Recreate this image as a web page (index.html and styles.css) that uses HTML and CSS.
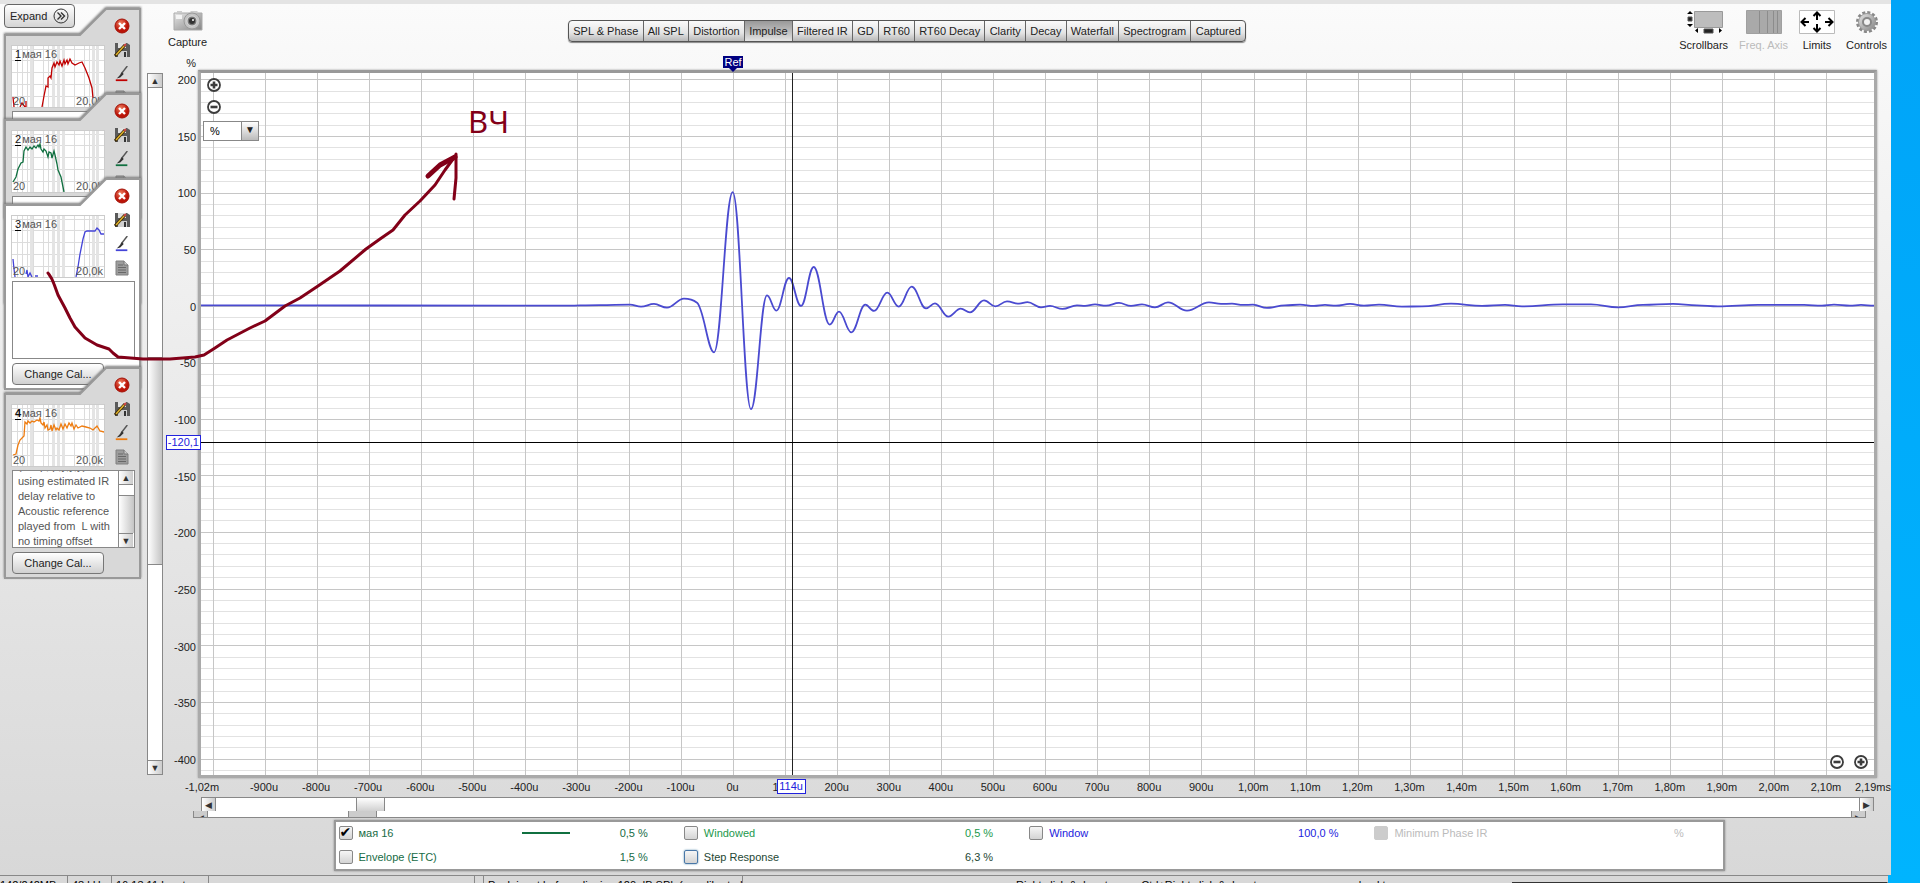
FILE: index.html
```html
<!DOCTYPE html>
<html lang="en">
<head>
    <meta charset="utf-8">
    <title>Impulse</title>
    <link rel="stylesheet" href="styles.css">
</head>
<body>
<svg class="defs" aria-hidden="true">
    <defs>
        <radialGradient id="red" cx="40%" cy="30%"><stop offset="0" stop-color="#f08060"/><stop offset="1" stop-color="#bb1408"/></radialGradient>
        <linearGradient id="steel" x2="1" y2="1"><stop offset="0" stop-color="#e6e6e6"/><stop offset="1" stop-color="#858585"/></linearGradient>
    </defs>
    <symbol id="shape" viewBox="0 0 137 212" preserveAspectRatio="none">
        <path d="M1 27H76L102 1H136V211H1Z"/>
    </symbol>
    <symbol id="delete" viewBox="0 0 16 16">
        <circle cx="8" cy="8" r="7" fill="url(#red)" stroke="#a31208"/>
        <path d="M5 5l6 6M11 5l-6 6" stroke="#fff" stroke-width="2.4"/>
    </symbol>
    <symbol id="save" viewBox="0 0 16 16">
        <path d="M1 1h12l3 2v12H1z" fill="#5a5a5a"/>
        <path d="M4 1h8v5H4z" fill="#e0e0e0"/><path d="M4 9h9v6H4z" fill="#d0d0d0"/><path d="M10 10h2v5h-2z" fill="#333"/>
        <path d="M1 14L11 3" stroke="#3c2a08" stroke-width="3"/><path d="M2 13L10 4" stroke="#e2b52c" stroke-width="1.4"/>
        <path d="M10 4l2-2" stroke="#c44" stroke-width="2"/>
    </symbol>
    <symbol id="pen" viewBox="0 0 16 18">
        <path d="M14 0L7 9" stroke="#555" stroke-width="1.6"/><path d="M8 7l2 2-4 4-4 1 3-3z" fill="#333"/>
        <path d="M1 16h13" stroke="currentColor" stroke-width="2"/>
    </symbol>
    <symbol id="notes" viewBox="0 0 14 16">
        <path d="M1 1h8l4 4v10H1z" fill="#9c9c9c" stroke="#808080"/><path d="M9 1v4h4" fill="#ccc" stroke="#777"/>
        <path d="M3 5h5M3 7.500h8M3 10h8M3 12.500h8" stroke="#686868"/>
    </symbol>
    <symbol id="thumbgrid" viewBox="0 0 92 61">
        <path d="M0 3.500h92M0 14.500h92M0 26.500h92M0 38.500h92M0 50.500h92M5.500 0v61M10.500 0v61M15.500 0v61M21.500 0v61M31.500 0v61M36.500 0v61M62.500 0v61M72.500 0v61M77.500 0v61" stroke="#dcdcdc" fill="none"/>
        <path d="M19.500 0v61M41.500 0v61M46.500 0v61M51.500 0v61M81.500 0v61M85.500 0v61" stroke="#e4e4e4" stroke-width="3"/>
    </symbol>
    <symbol id="plus" viewBox="0 0 14 14">
        <circle cx="7" cy="7" r="6" fill="#fff" stroke="#3c3c3c" stroke-width="1.800"/><path d="M3.500 7h7M7 3.500v7" stroke="#3c3c3c" stroke-width="2.600"/>
    </symbol>
    <symbol id="minus" viewBox="0 0 14 14">
        <circle cx="7" cy="7" r="6" fill="#fff" stroke="#3c3c3c" stroke-width="1.800"/><path d="M3.500 7h7" stroke="#3c3c3c" stroke-width="2.600"/>
    </symbol>
</svg>

<div class="window">
    <aside class="sidebar">
        <button class="expand">Expand
            <svg width="16" height="16" viewBox="0 0 16 16" fill="none" stroke="#333"><circle cx="8" cy="8" r="7"/><path d="M4.500 4.500L8 8l-3.500 3.500M8 4.500L11.500 8 8 11.500" stroke-width="1.400"/></svg>
        </button>

        <section class="card">
            <svg class="shape"><use href="#shape"/></svg>
            <div class="thumb">
                <svg viewBox="0 0 92 61"><use href="#thumbgrid"/><path class="trace red" d="M1 51L2 61M8 61L10 57 13 61M14 55V61M30 61L32 50 34 40 36 41 36 32 38 30 39 32 40 22 42 17 43 21 45 16 47 19 48 15 50 20 52 14 53 18 55 14 56 18 58 13 60 17 63 19 67 17 70 16 73 22 77 32 80 42 81 52"/></svg>
                <span class="name"><b>1</b>мая 16</span><span class="range"><i>20</i><i>20,0k</i></span>
            </div>
            <div class="icons red">
                <button aria-label="Delete"><svg><use href="#delete"/></svg></button>
                <button aria-label="Save"><svg><use href="#save"/></svg></button>
                <button aria-label="Colour"><svg><use href="#pen"/></svg></button>
                <button aria-label="Notes"><svg><use href="#notes"/></svg></button>
            </div>
            <div class="comment"><textarea aria-label="Comment 1"></textarea></div>
            <button class="cal">Change Cal...</button>
        </section>

        <section class="card">
            <svg class="shape"><use href="#shape"/></svg>
            <div class="thumb">
                <svg viewBox="0 0 92 61"><use href="#thumbgrid"/><path class="trace green" d="M1 51L4 46 6 38 9 32 11 31 12 20 14 16 16 19 18 16 20 18 22 15 24 17 26 14 27 16 28 13 29 18 31 21 32 18 34 20 36 26 37 21 39 22 40 27 42 20 43 24 45 33 46 39 49 46 52 61"/></svg>
                <span class="name"><b>2</b>мая 16</span><span class="range"><i>20</i><i>20,0k</i></span>
            </div>
            <div class="icons green">
                <button aria-label="Delete"><svg><use href="#delete"/></svg></button>
                <button aria-label="Save"><svg><use href="#save"/></svg></button>
                <button aria-label="Colour"><svg><use href="#pen"/></svg></button>
                <button aria-label="Notes"><svg><use href="#notes"/></svg></button>
            </div>
            <div class="comment"><textarea aria-label="Comment 2"></textarea></div>
            <button class="cal">Change Cal...</button>
        </section>

        <section class="card selected">
            <svg class="shape"><use href="#shape"/></svg>
            <div class="thumb">
                <svg viewBox="0 0 92 61"><use href="#thumbgrid"/><path class="trace blue" d="M1 43L2 53 3 61M14 58L15 54 16 61 18 57 20 61M23 60H26M64 61L66 51 68 38 71 23 73 16 75 15 81 15 83 15 85 12 87 14 89 18 92 18"/></svg>
                <span class="name"><b>3</b>мая 16</span><span class="range"><i>20</i><i>20,0k</i></span>
            </div>
            <div class="icons blue">
                <button aria-label="Delete"><svg><use href="#delete"/></svg></button>
                <button aria-label="Save"><svg><use href="#save"/></svg></button>
                <button aria-label="Colour"><svg><use href="#pen"/></svg></button>
                <button aria-label="Notes"><svg><use href="#notes"/></svg></button>
            </div>
            <div class="comment"><textarea aria-label="Comment 3"></textarea></div>
            <button class="cal">Change Cal...</button>
        </section>

        <section class="card last">
            <svg class="shape"><use href="#shape"/></svg>
            <div class="thumb">
                <svg viewBox="0 0 92 61"><use href="#thumbgrid"/><path class="trace orange" d="M1 50L4 49 6 40 8 35 11 32 12 31 13 17 15 19 16 16 18 18 20 16 22 17 25 15 27 16 28 13 29 18 31 20 32 17 33 23 35 20 36 25 38 24 39 20 40 26 42 20 44 25 45 23 47 25 49 19 51 24 53 19 55 23 57 18 59 21 60 18 62 24 64 20 66 23 70 21 74 22 78 23 81 25 85 21 88 26 92 27"/></svg>
                <span class="name"><b>4</b>мая 16</span><span class="range"><i>20</i><i>20,0k</i></span>
            </div>
            <div class="icons orange">
                <button aria-label="Delete"><svg><use href="#delete"/></svg></button>
                <button aria-label="Save"><svg><use href="#save"/></svg></button>
                <button aria-label="Colour"><svg><use href="#pen"/></svg></button>
                <button aria-label="Notes"><svg><use href="#notes"/></svg></button>
            </div>
            <div class="comment">
                <textarea id="comment4" aria-label="Comment 4">(temp, p,y,y,y)
using estimated IR
delay relative to
Acoustic reference
played from  L with
no timing offset</textarea>
                <div class="scroll vertical small">
                    <button aria-label="Scroll up">&#9650;</button>
                    <div class="track"><div class="before"></div><div class="handle"></div></div>
                    <button aria-label="Scroll down">&#9660;</button>
                </div>
            </div>
            <button class="cal">Change Cal...</button>
        </section>
    </aside>

    <main class="main">
        <header class="toolbar">
            <button class="tool">
                <svg width="30" height="22" viewBox="0 0 30 22"><path d="M1 3h28v17H1z" fill="url(#steel)" stroke="#aaa"/><path d="M4 1h5v2H4zM16 3l2-2h6l2 2z" fill="#ccc"/><path d="M3 5h6v4H3z" fill="#f4f4f4"/><circle cx="19" cy="11" r="8" fill="#c4c4c4" stroke="#999"/><circle cx="19" cy="11" r="5" fill="#777" stroke="#ddd"/><circle cx="19" cy="11" r="3" fill="#333"/><circle cx="20" cy="10" r="1" fill="#fff"/></svg>
                Capture
            </button>
            <nav class="tabs">
                <button>SPL &amp; Phase</button><button>All SPL</button><button>Distortion</button><button class="active">Impulse</button><button>Filtered IR</button><button>GD</button><button>RT60</button><button>RT60 Decay</button><button>Clarity</button><button>Decay</button><button>Waterfall</button><button>Spectrogram</button><button>Captured</button>
            </nav>
            <div class="tools">
                <button class="tool">
                    <svg width="38" height="24" viewBox="0 0 38 24"><path d="M9.500 1.500h28v16h-28z" fill="#bdbdbd" stroke="#999"/><path d="M3 7h4v4H3zM19 19h9v4h-9z" fill="#222" stroke="#555"/><path d="M2 4l3-3 3 3zM2 14l3 3 3-3zM13 18v5l-3-2.500zM34 18v5l3-2.500z" fill="#000"/></svg>
                    Scrollbars
                </button>
                <button class="tool" disabled>
                    <svg width="36" height="24" viewBox="0 0 36 24"><path d="M.5.500h35v23H.5z" fill="#a9a9a9" stroke="#a0a0a0"/><path d="M13.500 1v22M21.500 1v22M27.500 1v22M31.500 1v22" stroke="#8c8c8c"/></svg>
                    Freq. Axis
                </button>
                <button class="tool">
                    <svg width="36" height="24" viewBox="0 0 36 24"><path d="M.5.500h35v23H.5z" fill="#fff" stroke="#bbb"/><path d="M3 12h7M6.500 8L2.500 12l4 4M33 12h-7M29.500 8l4 4-4 4M18 10V3M14.500 6L18 2.500 21.500 6M18 14v7M14.500 18l3.500 3.500 3.500-3.500" fill="none" stroke="#000" stroke-width="2"/></svg>
                    Limits
                </button>
                <button class="tool">
                    <svg width="24" height="24" viewBox="0 0 24 24"><circle cx="12" cy="12" r="9.500" fill="none" stroke="#888" stroke-width="3" stroke-dasharray="3 1.970"/><circle cx="12" cy="12" r="8.500" fill="url(#steel)" stroke="#999"/><circle cx="12" cy="12" r="4" fill="#f2f2f2" stroke="#888" stroke-width="2"/></svg>
                    Controls
                </button>
            </div>
        </header>

        <div class="chart">
            <div class="scroll vertical levels">
                <button aria-label="Up">&#9650;</button>
                <div class="track"><div class="before"></div><div class="handle"></div></div>
                <button aria-label="Down">&#9660;</button>
            </div>
            <div class="yaxis">
                <span>%</span>
                <div class="yticks">
                    <span>200</span><span>150</span><span>100</span><span>50</span><span>0</span><span>-50</span><span>-100</span><span>-150</span><span>-200</span><span>-250</span><span>-300</span><span>-350</span><span>-400</span>
                </div>
            </div>
            <div class="plot">
                <svg class="graph" viewBox="201 73 1673 703" preserveAspectRatio="none">
                    <path id="minor" class="minor"/>
                    <path id="major" class="major"/>
                    <path id="impulse" class="impulse"/>
                </svg>
                <div class="cursor-x"></div>
                <div class="cursor-y"></div>
                <span class="ref">Ref</span>
                <span class="tag-x">114u</span>
                <span class="tag-y">-120,1</span>
                <div class="zoom-y">
                    <button aria-label="Zoom in level"><svg><use href="#plus"/></svg></button>
                    <button aria-label="Zoom out level"><svg><use href="#minus"/></svg></button>
                    <div class="units"><select aria-label="Units"><option>%</option></select></div>
                </div>
                <div class="zoom-x">
                    <button aria-label="Zoom out time"><svg><use href="#minus"/></svg></button>
                    <button aria-label="Zoom in time"><svg><use href="#plus"/></svg></button>
                </div>
            </div>
        </div>

        <div class="xaxis">
            <span>-1,02m</span><span>-900u</span><span>-800u</span><span>-700u</span><span>-600u</span><span>-500u</span><span>-400u</span><span>-300u</span><span>-200u</span><span>-100u</span><span>0u</span><span>100u</span><span>200u</span><span>300u</span><span>400u</span><span>500u</span><span>600u</span><span>700u</span><span>800u</span><span>900u</span><span>1,00m</span><span>1,10m</span><span>1,20m</span><span>1,30m</span><span>1,40m</span><span>1,50m</span><span>1,60m</span><span>1,70m</span><span>1,80m</span><span>1,90m</span><span>2,00m</span><span>2,10m</span><span>2,19ms</span>
        </div>

        <div class="scroll horizontal">
            <button aria-label="Left">&#9664;</button>
            <div class="track"><div class="before"></div><div class="handle"></div></div>
            <button aria-label="Right">&#9654;</button>
        </div>
        <div class="scroll horizontal lower">
            <button tabindex="-1" aria-label="Left">&#9664;</button>
            <div class="track"><div class="before"></div><div class="handle"></div></div>
            <button tabindex="-1" aria-label="Right">&#9654;</button>
        </div>

        <div class="legend">
            <div class="item dark"><input type="checkbox" id="t1" checked><label for="t1">мая 16</label><span class="line"></span><span class="value">0,5 %</span></div>
            <div class="item light"><input type="checkbox" id="t2"><label for="t2">Windowed</label><span class="value">0,5 %</span></div>
            <div class="item window-trace"><input type="checkbox" id="t3"><label for="t3">Window</label><span class="value">100,0 %</span></div>
            <div class="item off"><input type="checkbox" id="t4" disabled><label for="t4">Minimum Phase IR</label><span class="value">%</span></div>
            <div class="item etc"><input type="checkbox" id="t5"><label for="t5">Envelope (ETC)</label><span class="value">1,5 %</span></div>
            <div class="item step"><input type="checkbox" id="t6" class="focus"><label for="t6">Step Response</label><span class="value">6,3 %</span></div>
        </div>
    </main>

    <svg class="note" width="520" height="380" viewBox="0 0 520 380">
        <path d="M48 273C50 276 52 278 54 284L58 295 65 308 70 318 75 327 85 338 97 345 109 349 113 353 118 357 143 359H170L195 357 204 355 215 348 227 340 250 328 265 321 285 306 300 298 318 286 340 271 366 249 380 239 393 230 405 215 420 201 435 185 445 170 456 155M454 199L456 178 456 154"/>
        <path class="barb" d="M428 176L440 165 455 157"/>
        <text x="468" y="133">ВЧ</text>
    </svg>
</div>

<footer class="status">
    <span class="s1">142/242MB</span><span class="s2">48 kHz</span><span class="s3">16:13:11 Input</span><span class="s4"></span><span class="s5"></span><span class="s6">Peak input before clipping 120 dB SPL (uncalibrated)</span><span class="s7">Right click &amp; drag to pan; Ctrl+Right click &amp; drag to measure; mouse wheel to zoom;</span><span class="meter"></span>
</footer>
<script src="chart.js"></script>
</body>
</html>
```

FILE: styles.css
```css
* { box-sizing: border-box; }
html { height: 100%; background: linear-gradient(#00a4f8, #00b4fe); }
body { margin: 0; height: 100vh; display: flex; flex-direction: column; overflow: hidden; font: 11px/16px "Liberation Sans", Arial, sans-serif; color: #222; }
button { font: inherit; color: inherit; padding: 0; border: 0; background: none; }
.defs { position: absolute; width: 0; height: 0; }

.window { position: relative; flex: 1; min-height: 0; margin-right: 29px; display: flex; border-top: 4px solid #e4e4e4; background: linear-gradient(#fbfbfb, #f7f7f7 10%, #e4e4e4 65%, #d8d8d8); }

/* measurement list */
.sidebar { width: 141px; padding-left: 4px; }
.expand { display: flex; align-items: center; gap: 6px; height: 24px; padding: 0 5px; border: 1px solid #666; border-radius: 4px; background: linear-gradient(#fff, #d4d4d4); position: relative; z-index: 1; }
.card { position: relative; display: grid; grid-template-columns: 92px 28px; grid-template-rows: 101px 80px 22px; column-gap: 4px; padding: 0 5px 9px 8px; height: 212px; margin-bottom: -127px; }
.expand + .card { margin-top: -20px; }
.card.selected { margin-bottom: -23px; }
.shape { position: absolute; left: 0; top: 0; width: 137px; height: 212px; fill: #d8d8d8; stroke: #999; stroke-width: 2; filter: drop-shadow(0 -1px 1px #777); }
.selected .shape { fill: #fff; }
.thumb { position: relative; height: 61px; margin-top: 38px; background: #fff; outline: 1px solid #ccc; color: #555; }
.thumb svg { display: block; width: 100%; height: 100%; }
.trace { fill: none; stroke: currentColor; stroke-width: 1.3; }
.red { color: #c00000; }
.green { color: #107040; }
.blue { color: #4444d8; }
.orange { color: #ee7c10; }
.name, .range { position: absolute; left: 3px; right: 1px; top: 0; }
.name b { border-bottom: 1px solid #000; color: #111; margin-right: 1px; font-weight: normal; }
.last .name b { font-weight: bold; }
.range { top: 47px; left: 1px; display: flex; justify-content: space-between; }
.range i { font-style: normal; }
.icons { display: flex; flex-direction: column; align-items: center; gap: 8px; padding-top: 10px; position: relative; }
.icons svg { display: block; width: 16px; height: 16px; }
.comment { position: relative; grid-column: 1 / 3; width: 123px; height: 78px; margin-top: 2px; display: flex; border: 1px solid #888; background: #fff; }
.comment textarea { flex: 1; min-width: 0; height: 76px; border: 0; padding: 0 0 0 5px; resize: none; overflow: hidden; font: 11px/15px "Liberation Sans", Arial, sans-serif; color: #555; background: none; white-space: pre; }
.cal { position: relative; margin-top: 4px; height: 22px; border: 1px solid #777; border-radius: 4px; background: linear-gradient(#fff, #d0d0d0); }

/* scroll bars */
.scroll { display: flex; background: #fff; border: 1px solid #888; }
.scroll button { flex: none; width: 14px; height: 14px; font-size: 9px; line-height: 12px; background: linear-gradient(90deg, #fff, #ccc); color: #333; }
.track { flex: 1; display: flex; }
.vertical, .vertical .track { flex-direction: column; }
.vertical { width: 16px; }
.vertical button:first-child, .vertical .handle { border-bottom: 1px solid #888; }
.vertical button:last-child, .vertical .handle { border-top: 1px solid #888; }
.handle { background: linear-gradient(90deg, #fff, #c4c4c4); }
.levels .before { flex: 0 0 40%; }
.levels .handle { flex: 0 0 31%; }
.small { border-width: 0 0 0 1px; }
.small .before { flex: 0 0 10px; }
.small .handle { flex: 1; border-bottom: 0; }
.horizontal { height: 14px; margin: 2px 17px 0 60px; border-bottom: 0; overflow: hidden; }
.horizontal .before { flex: 0 0 140px; }
.horizontal .handle { flex: 0 0 29px; border: solid #888; border-width: 0 1px; background: linear-gradient(#fff, #d0d0d0); }
.horizontal button:first-child { border-right: 1px solid #888; }
.horizontal button:last-child { border-left: 1px solid #888; }
.lower { height: 7px; margin: 0 25px 0 52px; border-top: 0; border-bottom: 1px solid #888; }
.lower button, .lower .handle { background: #ccc; }
.lower button { line-height: 2px; }

/* top bar */
.main { flex: 1; min-width: 0; display: flex; flex-direction: column; }
.toolbar { display: grid; grid-template-columns: auto 5fr auto 6fr auto; height: 51px; padding: 6px 4px 0 27px; }
.tool { display: flex; flex-direction: column; align-items: center; gap: 3px; }
.toolbar > .tool { align-self: start; gap: 2px; }
.tools { grid-column: 5; display: flex; align-items: flex-start; gap: 11px; }
.tool:disabled { color: #bbb; }
.tabs { grid-column: 3; display: flex; min-width: 678px; height: 22px; margin-top: 10px; border: 1px solid #555; border-radius: 4px; background: linear-gradient(#fafafa, #e4e4e4 60%, #b8b8b8); box-shadow: 0 1px 1px #888; overflow: hidden; }
.tabs button { flex: 1 1 auto; padding: 0 4px; border-left: 1px solid #666; }
.tabs button:first-child { border-left: 0; }
.tabs .active { background: linear-gradient(#999, #bbb 50%, #e4e4e4); }

/* chart */
.chart { flex: 1; display: flex; padding-right: 14px; }
.levels { margin: 18px 0 3px 6px; }
.yaxis { width: 35px; display: flex; flex-direction: column; padding: 0 2px 10px 0; text-align: right; }
.yticks { flex: 1; display: flex; flex-direction: column; justify-content: space-between; padding-top: 1px; }
.plot { position: relative; flex: 1; margin-top: 15px; border: 3px solid #aaa; border-top-color: #999; background: #fff; box-shadow: 0 0 2px #999; }
.graph { position: absolute; width: 100%; height: 100%; }
.graph path { fill: none; vector-effect: non-scaling-stroke; }
.graph .minor { stroke: #e2e2e2; shape-rendering: crispEdges; }
.graph .major { stroke: #c6c6c6; shape-rendering: crispEdges; }
.graph .impulse { stroke: #4a4ad0; stroke-width: 1.8; }
.cursor-x { position: absolute; left: 35.3%; top: 0; bottom: 0; border-left: 1px solid #222; }
.cursor-y { position: absolute; top: 52.5%; left: 0; right: 0; border-top: 1px solid #000; }
.ref { position: absolute; left: 31.8%; bottom: 100%; margin: 0 0 5px -10px; width: 20px; background: #000080; color: #fff; line-height: 12px; text-align: center; }
.ref::after { content: ""; position: absolute; left: 6px; top: 12px; border: 4px solid transparent; border-top-color: #000080; }
.tag-x, .tag-y { position: absolute; border: 1px solid #22d; background: #fff; color: #22d; line-height: 13px; z-index: 1; }
.tag-x { left: 35.3%; top: 100%; margin: 4px 0 0 -15px; width: 29px; text-align: center; }
.tag-y { right: 100%; top: 52.5%; margin-top: -7px; padding: 0 1px; }
.zoom-y { position: absolute; left: 2px; top: 5px; display: grid; gap: 8px; justify-items: start; }
.zoom-y button { margin-left: 4px; }
.zoom-x { position: absolute; right: 6px; bottom: 6px; display: flex; gap: 10px; background: #fff; }
.zoom-x svg, .zoom-y svg { display: block; width: 14px; height: 14px; }
.units { position: relative; width: 56px; height: 20px; margin-top: -1px; border: 1px solid #888; background: #fff; }
.units select { width: 100%; height: 100%; appearance: none; border: 0; padding: 0 6px; background: none; font: inherit; }
.units::after { content: "\25BC"; position: absolute; right: 0; top: 0; width: 16px; height: 18px; border-left: 1px solid #888; background: linear-gradient(#fff, #bbb); font-size: 10px; text-align: center; pointer-events: none; }
.xaxis { display: grid; grid-template-columns: 72px repeat(31, 1fr) 39px; margin-left: 25px; height: 17px; line-height: 18px; text-align: center; white-space: nowrap; }
.xaxis span:last-child { text-align: right; }

/* traces */
.legend { display: grid; grid-template-columns: repeat(4, 1fr); row-gap: 5px; height: 51px; margin: 2px 9.5% 4px 11%; padding: 2px 3px; border: 2px solid #999; background: #fff; box-shadow: 0 0 2px #888; }
.item { display: flex; align-items: center; height: 17px; padding-right: 36px; }
.item input { appearance: none; width: 14px; height: 14px; margin: 0 6px 0 0; border: 1px solid #888; border-radius: 2px; background: linear-gradient(#f6f6f6, #d4d4d4); }
.item input:checked::after { content: "\2714"; display: block; color: #000; font: 14px/11px "DejaVu Sans", sans-serif; }
.item .focus { border-color: #4a78a8; box-shadow: 0 0 2px #58a; }
.item input:disabled { border-color: #ccc; background: #ccc; }
.value { margin-left: auto; }
.line { width: 48px; height: 2px; margin: 0 0 0 auto; background: #107040; }
.line + .value { width: 78px; margin-left: 0; text-align: right; }
.dark, .etc { color: #176b45; }
.light { color: #22994c; }
.window-trace { color: #22d; }
.off { color: #bbb; }
.step { color: #244734; }

/* hand drawn arrow over the window */
.note { position: absolute; left: 0; top: -4px; pointer-events: none; z-index: 2; }
.note path { fill: none; stroke: #820018; stroke-width: 3; stroke-linejoin: round; stroke-linecap: round; }
.note .barb { stroke-width: 5; }
.note text { font: 31px "Noto Sans", sans-serif; fill: #820018; }

.status { height: 8px; margin-right: 32px; display: flex; overflow: hidden; border-top: 1px solid #888; background: #d8d8d8; color: #000; white-space: nowrap; }
.status span { flex: none; height: 18px; padding: 1px 4px 0; border-right: 1px solid #888; overflow: hidden; }
.status .s1 { width: 68px; padding-left: 0; }
.status .s2 { width: 44px; }
.status .s3 { width: 97px; }
.status .s4 { width: 266px; }
.status .s5 { width: 9px; }
.status .s6 { width: 259px; }
.status .s7 { flex: 1; padding-left: 273px; border: 0; }
.status .meter { width: 376px; margin-top: 6px; background: #333; }
```

FILE: chart.js
```js
// impulse response turning points
var points = [
    [201, 305.7], [560, 306], [600, 305.4], [630, 305], [641, 307], [654, 304.3], [667, 308], [684, 299], [697, 303],
    [714, 352.7], [732.7, 192.3], [751, 409.7], [767, 295.7], [776.3, 311], [789, 278.3],
    [801, 306.3], [813.7, 267.3], [829.7, 325], [839, 312], [851.3, 332.7], [865.3, 305],
    [874, 311.3], [887.3, 293], [898.7, 307], [911.7, 287], [926, 308.7], [935, 303.7],
    [948.3, 317], [960.7, 309], [970, 312.7], [984, 300.7], [995.3, 306.7], [1007, 301.7],
    [1019, 304], [1027.5, 302.5], [1041, 307.7], [1050, 306.3], [1062.5, 309.3], [1077, 305.7],
    [1085, 306.3], [1095, 304.7], [1106, 306], [1119, 303.3], [1131, 306.3], [1142, 304.7],
    [1155, 307.7], [1168, 302.7], [1187, 311], [1209, 302.7], [1221, 304.3], [1232, 304],
    [1243, 305.3], [1253, 305], [1267, 308.3], [1285, 305.7], [1300, 305], [1314, 306.3],
    [1325, 305.3], [1336, 306], [1350, 304.3], [1364, 306], [1379, 305], [1402, 307],
    [1422, 306.7], [1451, 304], [1482, 306.3], [1505, 305.3], [1522, 306.7], [1563, 304.7],
    [1591, 304.7], [1618, 307.7], [1643, 305.3], [1673, 304.3], [1697, 305.7], [1718, 306.7],
    [1758, 305.3], [1804, 305.3], [1822, 306], [1834, 305], [1850, 306], [1861, 305.3], [1874, 306]
];

var d = 'M' + points[0].join(' ');
for (var i = 1; i < points.length; i++) {
    var a = points[i - 1], b = points[i];
    // the shoulder before the main dip has no flat spot
    if (b[0] == 697) { d += 'C688 299 693 300 697 303'; continue; }
    if (a[0] == 697) { d += 'C704 309 708 352.7 714 352.7'; continue; }
    var w = (b[0] - a[0]) * 0.4;
    d += 'C' + (a[0] + w) + ' ' + a[1] + ' ' + (b[0] - w) + ' ' + b[1] + ' ' + b[0] + ' ' + b[1];
}
document.getElementById('impulse').setAttribute('d', d);

var minor = '', major = '';
for (var v = 200; v >= -410; v -= 10) {
    if (v == -120) continue; // the level cursor sits here
    var y = Math.round(306 - v * 1.134) + 0.5;
    if (v % 50) minor += 'M201 ' + y + 'H1874';
    else major += 'M201 ' + y + 'H1874';
}
for (var t = -10; t <= 21; t++) {
    major += 'M' + (Math.round(733 + t * 52.05) + 0.5) + ' 73V776';
}
document.getElementById('minor').setAttribute('d', minor);
document.getElementById('major').setAttribute('d', major);

document.getElementById('comment4').scrollTop = 12;
```
